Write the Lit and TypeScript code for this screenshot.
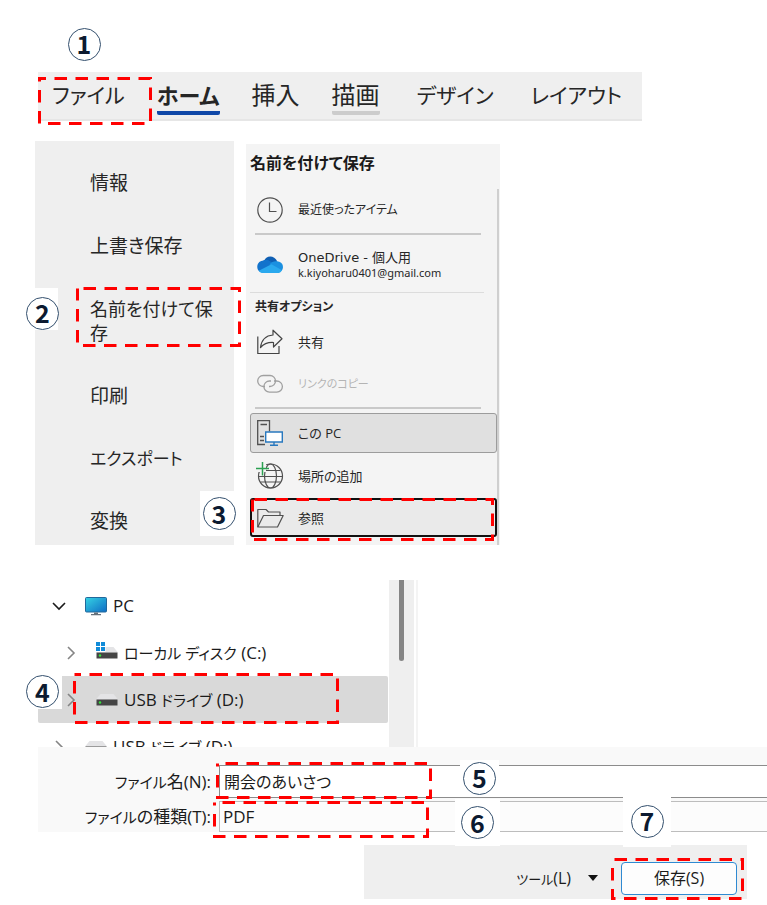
import { LitElement, html, css, svg } from "lit";
import { customElement, property } from "lit/decorators.js";

/** Red dashed rectangle laid over the control that a step refers to. */
@customElement("mark-frame")
class MarkFrame extends LitElement {
  @property({ type: Number }) phase = 0;

  static styles = css`
    :host { position: absolute; pointer-events: none; z-index: 2; }
    svg { display: block; width: 100%; height: 100%; }
    rect {
      x: 1.5px; y: 1.5px;
      width: calc(100% - 3px); height: calc(100% - 3px);
      fill: none; stroke: #ff0000; stroke-width: 3; stroke-dasharray: 12.5 8.5;
    }
  `;

  render() {
    return html`<svg aria-hidden="true"><rect stroke-dashoffset=${this.phase}></rect></svg>`;
  }
}

/** Circled step number on a white patch. */
@customElement("step-badge")
class StepBadge extends LitElement {
  static styles = css`
    :host {
      position: absolute; z-index: 3; box-sizing: border-box;
      display: flex; align-items: center; justify-content: center;
      background: #ffffff; color: #0c1a30;
      font: 700 25px/28px "Noto Sans CJK JP", sans-serif;
    }
    .ring {
      flex: none; box-sizing: border-box; width: 33px; height: 33px; padding-bottom: 2px;
      border: 1px solid #34506e; border-radius: 50%;
      display: flex; align-items: center; justify-content: center;
    }
  `;

  render() {
    return html`<span class="ring"><slot></slot></span>`;
  }
}

const clock = svg`<g fill="none" stroke="#505050" stroke-width="1.2"><circle cx="13" cy="13" r="12.2"/><path d="M12.5 5.5v9h7"/></g>`;

const cloud = svg`
  <path d="M7 9.500C8.500 3.500 17 2.500 20.300 9.500L13 14z" fill="#0f5fb3"/>
  <path d="M5.500 8.800C8.500 6.800 11.500 8 13 9.200L18 12 6 20.500C-1.500 20.500 -1.500 9.500 5.500 8.800z" fill="#1273cc"/>
  <path d="M20 9.300C27 9.500 27.500 17.500 23.500 19.700L12.500 12.500C14.500 9.800 17.500 8.800 20 9.300z" fill="#1b90e0"/>
  <path d="M1.800 18.700L14.500 12.200 25 18.200C23.800 20.400 22.500 21 20.500 21H6C4.200 21 2.800 20.200 1.800 18.700z" fill="#2aa9ee"/>`;

const share = svg`<g fill="none" stroke="#444" stroke-width="1.2"><path d="M.8 7.500V24.500H22V17"/><path d="M3.500 18.500C4.500 11 9 6.500 16 6V1.200L25 9.700 16.500 18V13.500C11 13.200 7 14.500 3.500 18.500z" stroke-linejoin="round"/></g>`;

const link = svg`<g fill="none" stroke="#a0a0a0" stroke-width="1.300"><path d="M8 15.500H6.200A5.500 5.500 0 0 1 6.200 4.500H13A5.500 5.500 0 0 1 13 15.500H12"/><path d="M17 10H19.800A5.600 5.600 0 0 1 19.800 21.200H12.500A5.600 5.600 0 0 1 12.500 10H14"/></g>`;

const computer = svg`
  <path d="M8 24.500H.7V.7H12.500V11.500M3.500 4.500H10M3 16.500H7M3 20.500H7" fill="none" stroke="#505050" stroke-width="1.300"/>
  <path d="M8.700 12H25.300V22H8.700z" fill="#fff" stroke="#2878be" stroke-width="1.400"/>
  <path d="M17 22V25.300M13 25.300H21" stroke="#2878be" stroke-width="1.400"/>`;

const globe = svg`
  <g fill="none" stroke="#505050" stroke-width="1.200"><circle cx="13.500" cy="13" r="12"/><ellipse cx="13.500" cy="13" rx="6" ry="12"/><path d="M3.500 7.500H23.500M1.500 13.500H25.500M3.500 19H23.500"/></g>
  <path d="M0 -1H9V9H0z" fill="#f4f4f4"/><path d="M5.500 -1V12.500M-1 5.500H12" stroke="#2aa050" stroke-width="1.500"/>`;

const folder = svg`<g fill="none" stroke="#505050" stroke-width="1.200" stroke-linejoin="round"><path d="M.8 22V4.500H9L11.500 7H23V10.500"/><path d="M.8 22L6.500 10.500H26.200L20.500 22z"/></g>`;

const icon26 = (body: unknown) => html`<svg class="ico" viewBox="0 0 26 26" aria-hidden="true">${body}</svg>`;

const monitor = html`<svg class="dev" viewBox="0 0 22 20" aria-hidden="true">
  <defs><linearGradient id="scr" x1="0" y1="0" x2="1" y2="1"><stop offset="0" stop-color="#35d3e4"/><stop offset="1" stop-color="#0f6cc4"/></linearGradient></defs>
  <rect x=".5" y="1.500" width="21" height="14.500" rx="1" fill="url(#scr)" stroke="#22689b"/>
  <path d="M9 16.500H13V18H16V19.300H6V18H9z" fill="#66717b"/></svg>`;

const drive = (system: boolean) => html`<svg class="dev" viewBox="0 2 22 20" aria-hidden="true">
  <path d="M4.500 6H17.500L22 11.500H0z" fill="#e4e4e6"/>
  <path d="M.500 11.500H21.500V17.500H.500z" fill="#454545"/><circle cx="4" cy="14.500" r="1.200" fill="#35e23c"/>
  ${system ? svg`<path d="M-1 0H9.500V11H-1z" fill="#fff"/><path d="M0 1H4V5H0zM5 1H9V5H5zM0 6H4V10H0zM5 6H9V10H5z" fill="#118bd8"/>` : null}</svg>`;

const chevron = html`<svg class="chev" viewBox="0 0 12 14" aria-hidden="true"><path d="M3 1L9 7 3 13" /></svg>`;
const chevronDown = html`<svg class="chev open" viewBox="0 0 12 14" aria-hidden="true"><path d="M0 4L6 10 12 4" /></svg>`;

@customElement("app-root")
class AppRoot extends LitElement {
  static styles = css`
    :host {
      display: block; background: #ffffff; color: #262626;
      font-family: "Open Sans", "Noto Sans CJK JP", sans-serif;
      font-feature-settings: "palt";
      overflow: hidden;
    }
    * { box-sizing: border-box; }
    button, input, select {
      font: inherit; font-feature-settings: inherit; color: inherit;
      margin: 0; border: 0; padding: 0; background: none; border-radius: 0; text-align: left;
    }
    ul { list-style: none; margin: 0; padding: 0; }
    h1, h2 { margin: 0; }
    svg { display: block; flex: none; overflow: visible; }

    .ribbon {
      position: relative; display: flex; gap: 32px; width: fit-content;
      margin: 72px 0 0 38px; height: 49px; padding: 0 20px 0 14px;
      background: #efefef; border-bottom: 2px solid #e6e6e6;
      font-size: 21px; line-height: 32px;
    }
    .tab { height: 43px; padding-top: 7px; border-bottom: 4px solid transparent; white-space: nowrap; display: flex; align-items: center; }
    .tab.kanji { font-size: 24px; }
    .tab.wide { margin-left: 5px; }
    .tab.current { font-size: 22px; font-weight: 700; border-color: #1048a8; border-radius: 2px; }
    .tab.near { border-color: #cccccc; border-radius: 2px; }
    .frame-file { left: 0; top: 5px; width: 114px; height: 48px; }
    .badge-1 { left: 27px; top: -46px; width: 38px; height: 36px; }

    .backstage { display: flex; gap: 12px; margin: 20px 0 0 35px; align-items: stretch; }
    .menu { position: relative; width: 199px; padding-top: 10px; background: #efefef; font-size: 19px; line-height: 24px; }
    .menu ul { display: flex; flex-direction: column; gap: 1px; }
    .menu li { position: relative; }
    .menu button { display: block; width: 100%; padding: 20px 12px 18px 55px; word-break: break-all; }
    .menu li:last-child button { padding: 19px 12px 12px 55px; }
    .menu .kana { font-size: 17px; }
    .menu .mixed { font-size: 18px; }
    .frame-saveas { left: 41px; top: 10px; width: 165px; height: 60px; }
    .badge-2 { left: -8px; top: 11px; width: 31px; height: 42px; padding-top: 8px; }
    .badge-3 { left: 165px; top: 1px; width: 38px; height: 45px; }

    .panel { width: 254px; margin-top: 3px; background: #f4f4f4; padding: 0 1px 0 4px; display: flex; flex-direction: column; }
    .panel h1 { font-size: 16px; line-height: 38px; color: #1a1a1a; white-space: nowrap; }
    .places { flex: 1; margin-top: 7px; border-right: 2px solid #cfcfcf; font-size: 13px; line-height: 16px; padding-bottom: 7px; }
    .place {
      position: relative; display: flex; align-items: center; gap: 15px;
      width: 247px; height: 42px; padding-left: 6px; border: 1px solid transparent; white-space: nowrap;
    }
    .recent { font-size: 12px; }
    .ico { width: 26px; height: 26px; }
    .rule { height: 2px; margin: 2px 16px 0 5px; background: #c9c9c9; }
    .rule.thin { height: 1px; margin: 0 13px 0 0; background: #dcdcdc; }
    .rule.spaced { margin-bottom: 4px; }
    .account { height: 57px; padding-top: 2px; font-family: "DejaVu Sans", "Noto Sans CJK JP", sans-serif; }
    .mail { display: block; font-family: "Noto Sans", sans-serif; font-size: 11px; line-height: 14px; }
    .places h2 { font-size: 12px; line-height: 28px; padding-left: 5px; }
    .off { color: #b4b4b4; font-size: 11px; }
    .selected { height: 40px; background: #e0e0e0; border-color: #9c9c9c; border-radius: 3px; }
    .add { height: 45px; }
    .browse { height: 39px; padding-left: 5px; background: #eaeaea; border: 2px solid #111111; border-radius: 3px; margin-bottom: 1px; }
    .frame-browse { left: -1px; top: -2px; width: 243px; height: 43px; }

    .explorer { display: flex; margin: 35px 0 0 38px; height: 167px; overflow: hidden; font-size: 17px; line-height: 24px; color: #1b1b1b; }
    .small { font-size: 15px; }
    .tree { width: 350px; padding-top: 2px; }
    .node { display: flex; align-items: center; height: 47px; padding-left: 27px; white-space: nowrap; }
    .node.top { padding-left: 15px; }
    .node.picked { background: #d9d9d9; border-radius: 2px; }
    .chev { width: 12px; height: 14px; margin-right: 19px; }
    .chev path { fill: none; stroke: #858585; stroke-width: 1.6; }
    .chev.open path { stroke: #1b1b1b; }
    .dev { width: 22px; height: 20px; margin-right: 6px; }
    .node.top .chev { margin-right: 20px; }
    .track { width: 25px; margin-left: 1px; padding-left: 10px; background: #efefef; }
    .thumb { width: 5px; height: 81px; background: #858585; border-radius: 0 0 3px 3px; }
    .pane { flex: 1; margin-left: 2px; border-left: 2px solid #f4f4f4; }
    .drives { position: relative; }
    .frame-usb { left: 73px; top: 93px; width: 266px; height: 51px; }
    .badge-4 { left: 23px; top: 94px; width: 39px; height: 35px; }

    .fields {
      position: relative; display: grid; grid-template-columns: 173px 1fr; column-gap: 8px; row-gap: 3px;
      margin-left: 38px; padding-top: 18px; background: #f9f9f9; font-size: 17px; line-height: 24px; color: #1b1b1b;
    }
    .fields label { text-align: right; align-self: center; white-space: nowrap; }
    .fields input, .fields select {
      width: 100%; min-width: 0; padding: 0 4px; appearance: none;
      border: 1px solid #8c8c8c; border-right: 0; background: #ffffff;
    }
    .fields input { height: 33px; padding-bottom: 2px; font-size: 16px; }
    .fields select { height: 31px; padding-left: 3px; background: #fcfcfc; border-color: #bdbdbd; }
    .frame-name { left: 178px; top: 15px; width: 216px; height: 37px; }
    .frame-type { left: 175px; top: 54px; width: 216px; height: 37px; }
    .badge-5 { left: 422px; top: 13px; width: 39px; height: 36px; }
    .badge-6 { left: 417px; top: 52px; width: 45px; height: 47px; }
    .badge-7 { left: 585px; top: 48px; width: 48px; height: 52px; }

    .actions {
      position: relative; display: flex; align-items: center; justify-content: flex-end;
      margin: 13px 20px 6px 364px; height: 54px; padding: 12px 10px 0 0;
      background: #efefef; font-size: 16px; line-height: 24px; color: #1b1b1b;
    }
    .tools { display: flex; align-items: center; gap: 17px; margin-right: 23px; white-space: nowrap; }
    .tools .small { font-size: 13px; }
    .arrow { width: 10px; height: 6px; }
    .save { width: 116px; height: 33px; text-align: center; background: #fdfdfd; border: 1px solid #2f8ad2; border-radius: 4px; }
    .frame-save { right: 3px; top: 13px; width: 133px; height: 42px; }
  `;

  render() {
    return html`
      <nav class="ribbon">
        <button class="tab">ファイル</button>
        <button class="tab current">ホーム</button>
        <button class="tab kanji">挿入</button>
        <button class="tab kanji near">描画</button>
        <button class="tab wide">デザイン</button>
        <button class="tab wide">レイアウト</button>
        <mark-frame class="frame-file" phase="6"></mark-frame>
        <step-badge class="badge-1">1</step-badge>
      </nav>

      <section class="backstage">
        <nav class="menu">
          <ul>
            <li><button>情報</button></li>
            <li><button>上書き保存</button></li>
            <li>
              <button class="mixed">名前を付けて保存</button>
              <mark-frame class="frame-saveas" phase="15"></mark-frame>
              <step-badge class="badge-2">2</step-badge>
            </li>
            <li><button>印刷</button></li>
            <li><button class="kana">エクスポート</button></li>
            <li><button>変換</button><step-badge class="badge-3">3</step-badge></li>
          </ul>
        </nav>
        <div class="panel">
          <h1>名前を付けて保存</h1>
          <div class="places">
            <button class="place recent">${icon26(clock)}<span>最近使ったアイテム</span></button>
            <div class="rule"></div>
            <button class="place account">${icon26(cloud)}<span>OneDrive - 個人用<span class="mail">k.kiyoharu0401@gmail.com</span></span></button>
            <div class="rule thin"></div>
            <h2>共有オプション</h2>
            <button class="place">${icon26(share)}<span>共有</span></button>
            <button class="place off" disabled>${icon26(link)}<span>リンクのコピー</span></button>
            <div class="rule spaced"></div>
            <button class="place selected">${icon26(computer)}<span>この PC</span></button>
            <button class="place add">${icon26(globe)}<span>場所の追加</span></button>
            <button class="place browse">${icon26(folder)}<span>参照</span><mark-frame class="frame-browse" phase="19"></mark-frame></button>
          </div>
        </div>
      </section>

      <section class="drives">
        <div class="explorer">
          <ul class="tree">
            <li class="node top">${chevronDown}${monitor}<span>PC</span></li>
            <li class="node">${chevron}${drive(true)}<span><span class="small">ローカル ディスク</span> (C:)</span></li>
            <li class="node picked">${chevron}${drive(false)}<span>USB <span class="small">ドライブ</span> (D:)</span></li>
            <li class="node top">${chevron}${drive(false)}<span>USB <span class="small">ドライブ</span> (D:)</span></li>
          </ul>
          <div class="track"><div class="thumb"></div></div>
          <div class="pane"></div>
        </div>
        <mark-frame class="frame-usb" phase="6"></mark-frame>
        <step-badge class="badge-4">4</step-badge>
      </section>

      <form class="fields">
        <label for="name"><span class="small">ファイル</span>名(N):</label>
        <input id="name" type="text" value="開会のあいさつ" />
        <label for="type"><span class="small">ファイル</span>の種類(T):</label>
        <select id="type"><option>PDF</option></select>
        <mark-frame class="frame-name" phase="13"></mark-frame>
        <mark-frame class="frame-type" phase="13"></mark-frame>
        <step-badge class="badge-5">5</step-badge>
        <step-badge class="badge-6">6</step-badge>
        <step-badge class="badge-7">7</step-badge>
      </form>

      <footer class="actions">
        <button class="tools"><span><span class="small">ツール</span>(L)</span><svg class="arrow" viewBox="0 0 10 6" aria-hidden="true"><path d="M0 0H10L5 6z" fill="#111"/></svg></button>
        <button class="save">保存(S)</button>
        <mark-frame class="frame-save" phase="19"></mark-frame>
      </footer>
    `;
  }
}
